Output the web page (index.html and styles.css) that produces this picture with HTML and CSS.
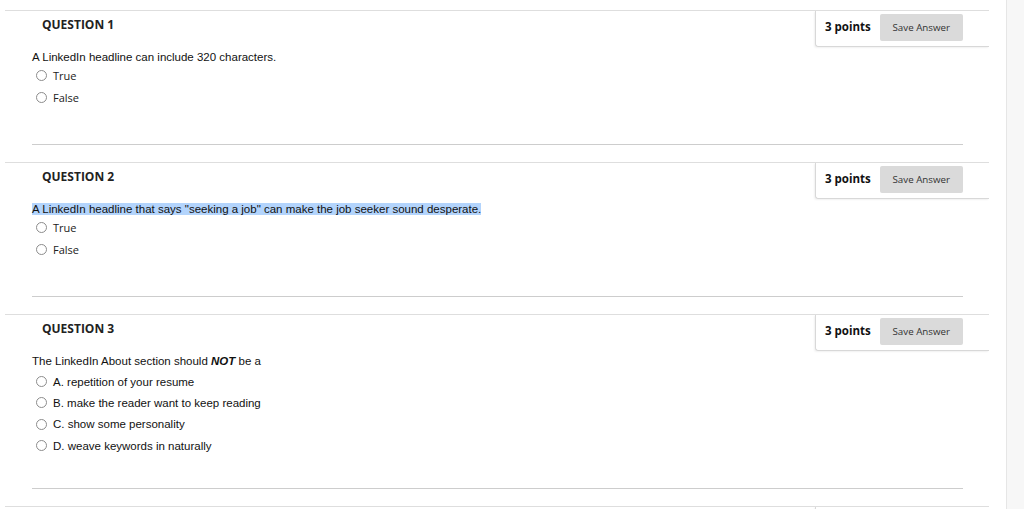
FILE: index.html
```html
<!DOCTYPE html>
<html>
<head>
<meta charset="utf-8">
<link rel="stylesheet" href="styles.css">
</head>
<body>
<div class="page">
  <main class="main">
    <section class="question">
      <div class="q-head">
        <h3 class="q-title">QUESTION 1</h3>
        <div class="q-points">
          <span class="points">3 points</span>
          <button class="save">Save Answer</button>
        </div>
      </div>
      <div class="q-body">
        <p class="q-text">A LinkedIn headline can include 320 characters.</p>
        <ul class="opts tf">
          <li class="opt"><span class="radio"></span><span class="lbl">True</span></li>
          <li class="opt"><span class="radio"></span><span class="lbl">False</span></li>
        </ul>
      </div>
    </section>
    <section class="question">
      <div class="q-head">
        <h3 class="q-title">QUESTION 2</h3>
        <div class="q-points">
          <span class="points">3 points</span>
          <button class="save">Save Answer</button>
        </div>
      </div>
      <div class="q-body">
        <p class="q-text"><span class="sel">A LinkedIn headline that says "seeking a job" can make the job seeker sound desperate.</span></p>
        <ul class="opts tf">
          <li class="opt"><span class="radio"></span><span class="lbl">True</span></li>
          <li class="opt"><span class="radio"></span><span class="lbl">False</span></li>
        </ul>
      </div>
    </section>
    <section class="question">
      <div class="q-head">
        <h3 class="q-title">QUESTION 3</h3>
        <div class="q-points">
          <span class="points">3 points</span>
          <button class="save">Save Answer</button>
        </div>
      </div>
      <div class="q-body">
        <p class="q-text">The LinkedIn About section should <b><i>NOT</i></b> be a</p>
        <ul class="opts mc">
          <li class="opt"><span class="radio"></span><span class="lbl">A. repetition of your resume</span></li>
          <li class="opt"><span class="radio"></span><span class="lbl">B. make the reader want to keep reading</span></li>
          <li class="opt"><span class="radio"></span><span class="lbl">C. show some personality</span></li>
          <li class="opt"><span class="radio"></span><span class="lbl">D. weave keywords in naturally</span></li>
        </ul>
      </div>
    </section>
    <section class="question">
      <div class="q-head">
        <div class="q-points"></div>
      </div>
    </section>
  </main>
  <div class="scrollbar"></div>
</div>
</body>
</html>
```

FILE: styles.css
```css
html, body {
  margin: 0;
  padding: 0;
  background: #fff;
  height: 509px;
  overflow: hidden;
}
.page {
  display: flex;
  height: 509px;
}
.main {
  width: 1006px;
  padding-top: 10px;
  display: flex;
  flex-direction: column;
  gap: 17px;
}
.scrollbar {
  flex: 1;
  border-left: 1px solid #e6e6e6;
  background: #f7f7f7;
}
.question {
  margin-left: 5px;
  width: 984px;
  border-top: 1px solid #dedede;
  flex-shrink: 0;
}
.q-head {
  display: flex;
  justify-content: space-between;
  align-items: flex-start;
  height: 36px;
}
.q-title {
  margin: 0;
  padding: 6px 0 0 37px;
  font-family: "Open Sans", sans-serif;
  font-weight: 700;
  font-size: 12px;
  line-height: 16px;
  color: #222;
}
.q-points {
  margin-left: auto;
  width: 138px;
  height: 35px;
  padding: 0 26px 0 9px;
  display: flex;
  align-items: center;
  gap: 9px;
  border-left: 1px solid #d8d8d8;
  border-bottom: 1px solid #d8d8d8;
  border-bottom-left-radius: 3px;
  box-shadow: -1px 1px 2px rgba(0,0,0,0.06);
}
.points {
  font-family: "Open Sans", sans-serif;
  font-weight: 700;
  font-size: 11.5px;
  color: #111;
  padding-bottom: 4px;
  white-space: nowrap;
}
.save {
  width: 83px;
  height: 27px;
  margin-bottom: 2px;
  border: none;
  border-radius: 2px;
  background: #dadada;
  font-family: "Open Sans", sans-serif;
  font-size: 9.75px;
  color: #333;
  padding: 0;
  flex-shrink: 0;
}
.q-body {
  margin-left: 27px;
  width: 931px;
  border-bottom: 1px solid #cdcdcd;
}
.q-text {
  margin: 3px 0 0 0;
  font-family: "Liberation Sans", Arial, sans-serif;
  font-size: 11.5px;
  line-height: 14px;
  color: #111;
}
.sel {
  background: #b3d4fc;
}
.opts {
  list-style: none;
  margin: 0;
  padding: 0;
  display: flex;
  flex-direction: column;
}
.opts.tf {
  margin-top: 0;
  padding-bottom: 35px;
}
.opts.mc {
  margin-top: 3px;
  padding-bottom: 32px;
}
.opt {
  display: flex;
  align-items: center;
  padding-left: 4px;
  gap: 6px;
}
.tf .opt {
  height: 22.5px;
}
.mc .opt {
  height: 21.33px;
}
.radio {
  width: 9px;
  height: 9px;
  border: 1px solid #8c8c8c;
  border-radius: 50%;
  background: #fff;
  flex-shrink: 0;
}
.tf .lbl {
  font-family: "Open Sans", sans-serif;
  font-size: 11px;
  color: #222;
}
.mc .lbl {
  font-family: "Liberation Sans", Arial, sans-serif;
  font-size: 11.5px;
  color: #111;
}
```
